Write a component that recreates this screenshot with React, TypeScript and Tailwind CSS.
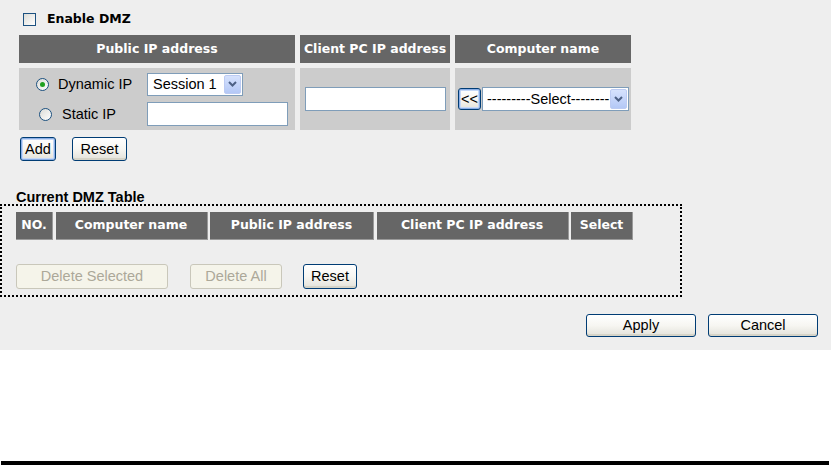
import React from "react";

const sans = { fontFamily: '"Liberation Sans", Arial, sans-serif' };
const head = { fontFamily: '"DejaVu Sans", Verdana, sans-serif' };

function XpButton({
  children,
  className = "",
  focused = false,
  disabled = false,
}: {
  children: React.ReactNode;
  className?: string;
  focused?: boolean;
  disabled?: boolean;
}) {
  if (disabled) {
    return (
      <div
        className={`flex items-center justify-center rounded-[3px] border border-[#c9c7ba] bg-[#f5f4ea] text-[#aca899] text-[14.5px] leading-none ${className}`}
        style={sans}
      >
        {children}
      </div>
    );
  }
  return (
    <div
      className={`flex items-center justify-center rounded-[3px] border border-[#003c74] bg-linear-to-b from-white via-[#f7f6f2] to-[#e3e2da] text-black text-[14.5px] leading-none ${
        focused ? "shadow-[inset_0_0_0_1px_#8aaee6,inset_0_0_0_2px_#c6d8f6]" : "shadow-[inset_0_-2px_0_#d6d4c8]"
      } ${className}`}
      style={sans}
    >
      {children}
    </div>
  );
}

function Radio({ checked = false }: { checked?: boolean }) {
  return (
    <div className="w-[13px] h-[13px] rounded-full border border-[#1c5180] bg-linear-to-br from-[#dcdcd7] to-white flex items-center justify-center shrink-0">
      {checked && <div className="w-[5px] h-[5px] rounded-full bg-[#21a121]" />}
    </div>
  );
}

function Arrow() {
  return (
    <div className="w-[17px] self-stretch my-[1px] mr-[1px] rounded-[2px] border border-[#bccbf3] bg-linear-to-b from-[#d6e2fd] to-[#b4c8f6] flex items-center justify-center">
      <svg width="9" height="6" viewBox="0 0 9 6">
        <path d="M1 1 L4.5 4.5 L8 1" fill="none" stroke="#4d6185" strokeWidth="2" />
      </svg>
    </div>
  );
}

function Header({ children, className = "" }: { children: React.ReactNode; className?: string }) {
  return (
    <div
      className={`h-[28px] bg-[#666666] text-white font-bold text-[12.5px] flex items-center justify-center whitespace-nowrap ${className}`}
      style={head}
    >
      {children}
    </div>
  );
}

export default function App() {
  return (
    <div className="w-[831px] h-[465px] bg-white flex flex-col overflow-hidden" style={sans}>
      <div className="h-[350px] bg-[#eeeeee] flex flex-col">
        {/* Enable DMZ */}
        <div className="mt-[13px] ml-[23px] h-[13px] flex items-center">
          <div className="w-[13px] h-[13px] border border-[#1c5180] bg-linear-to-br from-[#dcdcd7] to-white" />
          <span className="ml-[11px] font-bold text-[12.5px] text-black leading-none" style={head}>
            Enable DMZ
          </span>
        </div>

        {/* Entry table */}
        <div className="mt-[9px] ml-[19px] grid grid-cols-[276px_150px_176px] gap-[5px]">
          <Header>Public IP address</Header>
          <Header>Client PC IP address</Header>
          <Header>Computer name</Header>

          <div className="h-[62px] bg-[#cccccc] flex flex-col pt-[4px] text-[14.5px] text-black">
            <div className="flex items-center h-[24px]">
              <div className="w-[128px] pl-[17px] flex items-center">
                <Radio checked />
                <span className="ml-[9px] leading-none">Dynamic IP</span>
              </div>
              <div className="w-[96px] h-[23px] border border-[#7f9db9] bg-white flex items-stretch">
                <span className="flex-1 pl-[5px] flex items-center leading-none">Session 1</span>
                <Arrow />
              </div>
            </div>
            <div className="flex items-center h-[24px] mt-[6px]">
              <div className="w-[128px] pl-[20px] flex items-center">
                <Radio />
                <span className="ml-[10px] leading-none">Static IP</span>
              </div>
              <div className="w-[141px] h-[24px] border border-[#7f9db9] bg-white" />
            </div>
          </div>

          <div className="h-[62px] bg-[#cccccc] flex items-center pl-[5px]">
            <div className="w-[141px] h-[24px] border border-[#7f9db9] bg-white" />
          </div>

          <div className="h-[62px] bg-[#cccccc] flex items-center pl-[3px] text-[14.5px] text-black">
            <XpButton focused className="w-[23px] h-[22px] text-[13px]">
              &lt;&lt;
            </XpButton>
            <div className="ml-[1px] w-[147px] h-[24px] border border-[#7f9db9] bg-white flex items-stretch">
              <span className="flex-1 pl-[4px] flex items-center leading-none whitespace-nowrap overflow-hidden">
                ---------Select--------
              </span>
              <Arrow />
            </div>
          </div>
        </div>

        {/* Add / Reset */}
        <div className="mt-[7px] ml-[20px] flex">
          <XpButton focused className="w-[36px] h-[24px]">
            Add
          </XpButton>
          <XpButton className="ml-[16px] w-[55px] h-[24px]">Reset</XpButton>
        </div>

        {/* Current DMZ Table */}
        <div className="mt-[30px] ml-[16px] h-[13px] leading-[13px] font-bold text-[14.5px] text-black">
          Current DMZ Table
        </div>
        <div className="w-[682px] h-[93px] border-2 border-dotted border-black flex flex-col pt-[6px] pl-[14px]">
          <div className="grid grid-cols-[37px_152px_164px_192px_62px] gap-x-[2.5px] w-fit">
            <Header className="border-r border-b border-[#9a9a9a]">NO.</Header>
            <Header className="border-r border-b border-[#9a9a9a]">Computer name</Header>
            <Header className="border-r border-b border-[#9a9a9a]">Public IP address</Header>
            <Header className="border-r border-b border-[#9a9a9a]">Client PC IP address</Header>
            <Header className="border-r border-b border-[#9a9a9a]">Select</Header>
          </div>
          <div className="mt-[24px] flex">
            <XpButton disabled className="w-[152px] h-[25px]">
              Delete Selected
            </XpButton>
            <XpButton disabled className="ml-[22px] w-[92px] h-[25px]">
              Delete All
            </XpButton>
            <XpButton className="ml-[21px] w-[54px] h-[25px]">Reset</XpButton>
          </div>
        </div>

        {/* Apply / Cancel */}
        <div className="mt-[17px] ml-[586px] flex">
          <XpButton className="w-[110px] h-[23px]">Apply</XpButton>
          <XpButton className="ml-[12px] w-[110px] h-[23px]">Cancel</XpButton>
        </div>
      </div>
      <div className="flex-1" />
      <div className="ml-[1px] w-[828px] h-[4px] bg-black" />
    </div>
  );
}
